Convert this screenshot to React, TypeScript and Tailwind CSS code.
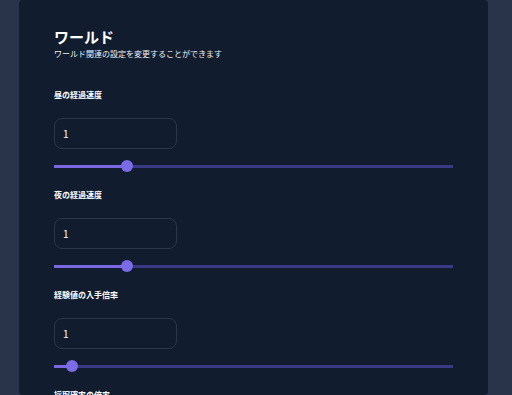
import React from "react";

const font = { fontFamily: '"Noto Sans CJK JP", "Noto Sans", sans-serif' };

function Setting({ label, pct }: { label: string; pct: number }) {
  return (
    <div className="flex flex-col">
      <div className="text-[8px] leading-[12px] font-bold text-white">{label}</div>
      <input
        defaultValue="1"
        className="mt-[17px] w-[123px] h-[31px] rounded-[8px] border border-[#2b3648] bg-transparent pl-[8px] text-[10px] text-white outline-none"
      />
      <div className="relative mt-[11px] h-[12px] w-full flex items-center">
        <div className="h-[3px] w-full bg-[#3a3a84]" />
        <div
          className="absolute left-0 top-[4.5px] h-[3px] bg-[#7a68e2]"
          style={{ width: `${pct}%` }}
        />
        <div
          className="absolute top-0 h-[12px] w-[12px] -ml-[6px] rounded-full bg-[#7b6be6]"
          style={{ left: `${pct}%` }}
        />
      </div>
    </div>
  );
}

export default function App() {
  return (
    <div className="h-[395px] w-[512px] overflow-hidden bg-[#29344a] pl-[19px]" style={font}>
      <div className="h-full w-[469px] rounded-[4px] bg-[#111c2f] px-[35px] pt-[27px]">
        <h1 className="text-[15px] leading-[20px] font-bold text-white">ワールド</h1>
        <p className="mt-[1px] text-[8px] leading-[12px] text-[#eef0f4]">
          ワールド関連の設定を変更することができます
        </p>
        <div className="mt-[29px] flex flex-col gap-[17px]">
          <Setting label="昼の経過速度" pct={18.3} />
          <Setting label="夜の経過速度" pct={18.3} />
          <Setting label="経験値の入手倍率" pct={4.5} />
          <Setting label="採取確率の倍率" pct={18.3} />
        </div>
      </div>
    </div>
  );
}
